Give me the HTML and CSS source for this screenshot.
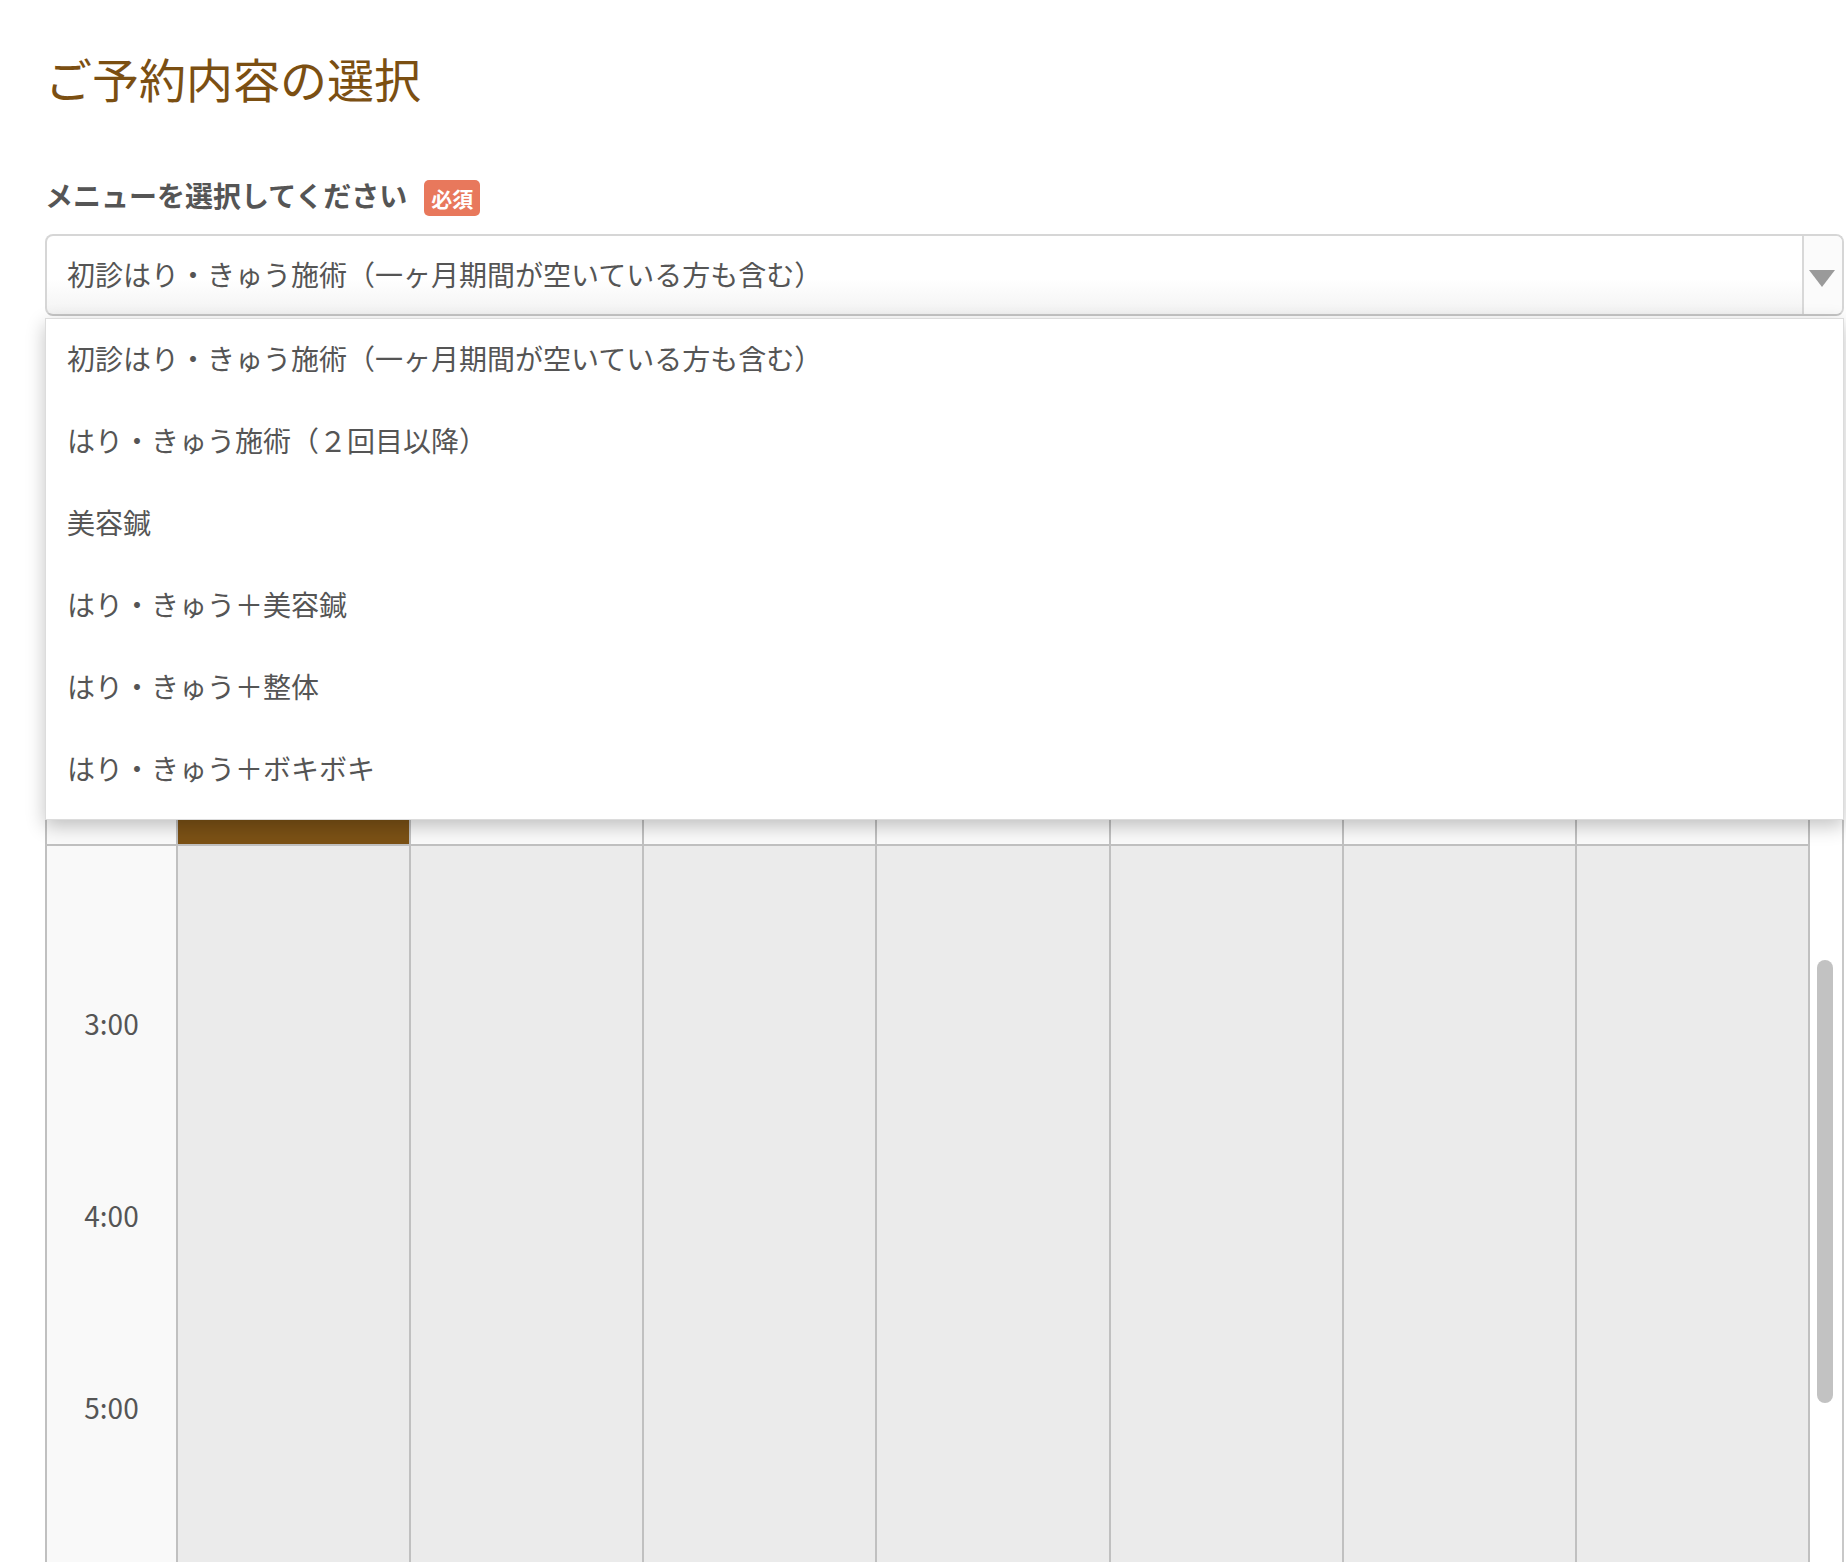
FILE: index.html
```html
<!DOCTYPE html>
<html lang="ja">
<head>
<meta charset="utf-8">
<title>ご予約内容の選択</title>
<link rel="stylesheet" href="styles.css">
</head>
<body>
<div class="page">
  <h1 class="title">ご予約内容の選択</h1>

  <div class="label-row">
    <span class="label">メニューを選択してください</span>
    <span class="badge">必須</span>
  </div>

  <div class="select-wrap">
    <div class="select">
      <span class="select-text">初診はり・きゅう施術（一ヶ月期間が空いている方も含む）</span>
      <span class="select-arrow">
        <svg width="26" height="17" viewBox="0 0 26 17"><polygon points="0,0 26,0 13,17" fill="#9a9a9a"/></svg>
      </span>
    </div>
    <ul class="options">
      <li>初診はり・きゅう施術（一ヶ月期間が空いている方も含む）</li>
      <li>はり・きゅう施術（２回目以降）</li>
      <li>美容鍼</li>
      <li>はり・きゅう＋美容鍼</li>
      <li>はり・きゅう＋整体</li>
      <li>はり・きゅう＋ボキボキ</li>
    </ul>
  </div>

  <div class="calendar">
    <div class="cal-table">
      <div class="head time"></div>
      <div class="head today">2/4(火)</div>
      <div class="head">2/5(水)</div>
      <div class="head">2/6(木)</div>
      <div class="head">2/7(金)</div>
      <div class="head sat">2/8(土)</div>
      <div class="head sun">2/9(日)</div>
      <div class="head">2/10(月)</div>

      <div class="times">
        <div class="hour">3:00</div>
        <div class="hour">4:00</div>
        <div class="hour">5:00</div>
      </div>
      <div class="cell"></div>
      <div class="cell"></div>
      <div class="cell"></div>
      <div class="cell"></div>
      <div class="cell"></div>
      <div class="cell"></div>
      <div class="cell"></div>
    </div>
    <div class="gutter"><div class="thumb"></div></div>
  </div>
</div>
</body>
</html>
```

FILE: styles.css
```css
html, body {
  margin: 0;
  padding: 0;
  background: #fff;
  overflow: hidden;
}
body {
  font-family: "Noto Sans CJK JP", "Noto Sans", sans-serif;
  color: #555;
}
.page {
  padding: 45px 2px 0 45px;
}
.title {
  margin: 0;
  font-size: 47px;
  line-height: 66px;
  font-weight: 400;
  color: #7b4f12;
}
.label-row {
  margin-top: 69px;
  display: flex;
  align-items: flex-start;
  gap: 17px;
  height: 36px;
}
.label {
  font-size: 28px;
  font-weight: 700;
  line-height: 30px;
  color: #555;
}
.badge {
  background: #e8785c;
  color: #fff;
  font-size: 21px;
  font-weight: 700;
  line-height: 36px;
  height: 36px;
  padding: 0 7px;
  border-radius: 5px;
}
.select-wrap {
  position: relative;
  margin-top: 18px;
}
.select {
  height: 82px;
  box-sizing: border-box;
  border: 2px solid #d6d6d6;
  border-bottom-color: #c6c6c6;
  border-radius: 8px;
  display: flex;
  align-items: center;
  background: linear-gradient(#fff 55%, #f3f3f3);
}
.select-text {
  flex: 1;
  padding-left: 20px;
  padding-bottom: 2px;
  font-size: 28px;
  line-height: 40px;
  color: #555;
}
.select-arrow {
  width: 40px;
  align-self: stretch;
  border-left: 2px solid #d8d8d8;
  display: flex;
  align-items: center;
  justify-content: center;
  padding-top: 6px;
  padding-right: 2px;
  box-sizing: border-box;
  background: #fbfbfb;
  border-radius: 0 6px 6px 0;
}
.options {
  position: absolute;
  left: 0;
  right: 0;
  top: calc(100% + 2px);
  margin: 0;
  padding: 0 0 8px;
  list-style: none;
  background: #fff;
  border: 1px solid #dcdcdc;
  box-shadow: 0 6px 18px rgba(0, 0, 0, 0.24);
  z-index: 10;
}
.options li {
  height: 82px;
  box-sizing: border-box;
  display: flex;
  align-items: center;
  padding-left: 21px;
  padding-bottom: 4px;
  font-size: 28px;
  color: #555;
}
.calendar {
  margin-top: 424px;
  display: flex;
  border-right: 2px solid #c8c8c8;
}
.cal-table {
  flex: 1;
  display: grid;
  grid-template-columns: 133px repeat(7, 1fr);
  grid-template-rows: 106px 716px;
}
.head {
  box-sizing: border-box;
  border-right: 2px solid #c0c0c0;
  border-bottom: 2px solid #c0c0c0;
  background: #fafafa;
  display: flex;
  align-items: flex-end;
  justify-content: center;
  padding-bottom: 28px;
  font-size: 24px;
  line-height: 39px;
  color: #444;
}
.head.time {
  border-left: 2px solid #c0c0c0;
}
.head.today {
  background: #7b5115;
  color: #fff;
}
.head.sat {
  color: #3b8ed3;
}
.head.sun {
  color: #e2563d;
}
.cell {
  border-right: 2px solid #c0c0c0;
  background: #ebebeb;
}
.times {
  box-sizing: border-box;
  border-left: 2px solid #c0c0c0;
  border-right: 2px solid #c0c0c0;
  background: #f9f9f9;
  padding-top: 82px;
  overflow: hidden;
}
.hour {
  height: 192px;
  display: flex;
  align-items: center;
  justify-content: center;
  padding-bottom: 2px;
  box-sizing: border-box;
  font-size: 28px;
  color: #555;
}
.gutter {
  width: 32px;
  flex: none;
  background: #fff;
}
.thumb {
  margin-top: 220px;
  margin-left: 7px;
  width: 16px;
  height: 443px;
  border-radius: 8px;
  background: #c2c2c2;
}
```
